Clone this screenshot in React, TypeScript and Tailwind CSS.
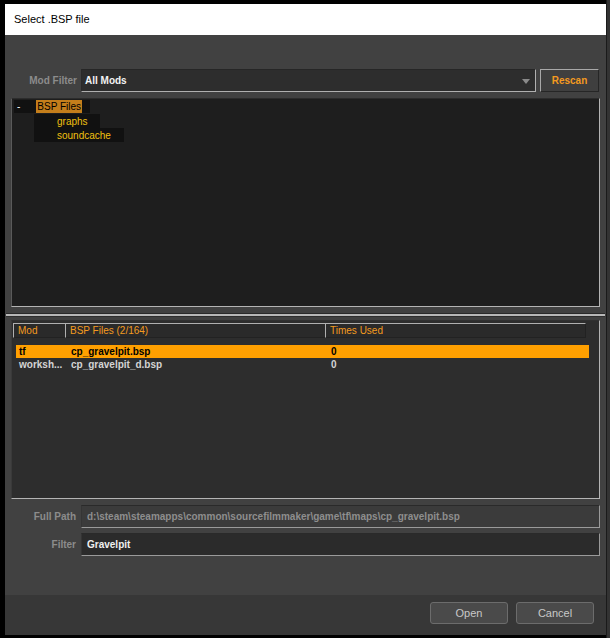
import React from 'react';

const sans = { fontFamily: '"Liberation Sans", Arial, sans-serif' };

type Row = { mod: string; file: string; used: string; selected?: boolean };

const rows: Row[] = [
  { mod: 'tf', file: 'cp_gravelpit.bsp', used: '0', selected: true },
  { mod: 'worksh...', file: 'cp_gravelpit_d.bsp', used: '0' },
];

function Field({ label, value, disabled }: { label: string; value: string; disabled?: boolean }) {
  return (
    <div className="flex h-[23px]">
      <div className="w-[76px] pr-[5px] flex items-center justify-end text-[10px] font-bold text-[#8c8c8c]">
        {label}
      </div>
      <div
        className={`w-[519px] flex items-center pl-[5px] border-t border-l border-t-[#2a2a2a] border-l-[#353535] border-b border-r border-b-[#9a9a9a] border-r-[#9a9a9a] text-[10px] font-bold ${
          disabled ? 'bg-[#3b3b3b] text-[#8e8e8e]' : 'bg-[#2b2b2b] text-[#f0f0f0]'
        }`}
      >
        {value}
      </div>
    </div>
  );
}

export default function App() {
  return (
    <div className="w-[610px] h-[638px] bg-black flex overflow-hidden" style={sans}>
      <div className="w-[5px] shrink-0" />

      <div className="w-[601px] shrink-0 pt-[4px] flex flex-col">
        {/* Title bar */}
        <div className="h-[31px] bg-white flex items-center pl-[9px] text-[11px] text-black">
          Select .BSP file
        </div>

        {/* Body */}
        <div className="h-[560px] bg-[#414141] flex flex-col pt-[34px]">
          {/* Mod filter row */}
          <div className="flex h-[23px]">
            <div className="w-[76px] pr-[4px] flex items-center justify-end text-[10px] font-bold text-[#8c8c8c]">
              Mod Filter
            </div>
            <div className="w-[455px] relative flex items-center pl-[3px] bg-[#2d2d2d] border-t border-l border-t-[#262626] border-l-[#2a2a2a] border-b border-r border-b-[#b0b0b0] border-r-[#b0b0b0] text-[10px] font-bold text-[#f2f2f2]">
              All Mods
              <svg className="absolute right-[5px] top-[9px]" width="8" height="5" viewBox="0 0 8 5">
                <path d="M0 0 H8 L4 5 Z" fill="#8a8a8a" />
              </svg>
            </div>
            <div className="ml-[4px] w-[59px] flex items-center justify-center bg-[#3f3f3f] border-t border-l border-t-[#a8a8a8] border-l-[#a8a8a8] border-b border-r border-b-[#262626] border-r-[#262626] text-[10px] font-bold text-[#f39a1f]">
              Rescan
            </div>
          </div>

          {/* Tree panel */}
          <div className="mt-[6px] ml-[6px] w-[589px] h-[209px] bg-[#1e1e1e] border-t border-l border-t-[#2c2c2c] border-l-[#5a5a5a] border-b border-r border-b-[#b4b4b4] border-r-[#b4b4b4] pt-[1px] text-[10px]">
            <div className="flex h-[14px]">
              <div className="ml-[2px] w-[76px] h-[13px] bg-[#111111] flex items-center">
                <span className="ml-[3px] text-white">-</span>
                <span className="ml-[16px] px-[1px] h-[13px] flex items-center bg-[#c47e1b] text-black">
                  BSP Files
                </span>
              </div>
            </div>
            <div className="flex h-[14px]">
              <div className="ml-[22px] w-[66px] h-[14px] bg-[#111111] flex items-center pl-[23px] text-[#f0c010]">
                graphs
              </div>
            </div>
            <div className="flex h-[14px]">
              <div className="ml-[22px] w-[90px] h-[14px] bg-[#111111] flex items-center pl-[23px] text-[#f0c010]">
                soundcache
              </div>
            </div>
          </div>

          {/* Splitter */}
          <div className="h-[13px] flex flex-col">
            <div className="h-[6px]" />
            <div className="h-[1px] ml-[1px] w-[599px] bg-[#2a2a2a]" />
            <div className="h-[2px] ml-[1px] w-[599px] bg-[#b8b8b8]" />
            <div className="h-[1px] ml-[1px] w-[599px] bg-[#2f2f2f]" />
          </div>

          {/* List panel */}
          <div className="ml-[6px] w-[589px] h-[179px] bg-[#2d2d2d] border-t border-l border-t-[#303030] border-l-[#3a3a3a] border-b border-r border-b-[#b4b4b4] border-r-[#b4b4b4] pt-[2px] pl-[1px]">
            <div className="flex h-[15px] text-[10px] text-[#f39a1f]">
              <div className="w-[52px] pl-[4px] flex items-center bg-[#2a2a2a] border-t border-l border-[#b0b0b0] border-b border-b-[#222222]">
                Mod
              </div>
              <div className="w-[260px] pl-[4px] flex items-center bg-[#2a2a2a] border-t border-l border-[#b0b0b0] border-b border-b-[#222222]">
                BSP Files (2/164)
              </div>
              <div className="w-[261px] pl-[4px] flex items-center bg-[#2a2a2a] border-t border-l border-[#b0b0b0] border-b border-b-[#222222] border-r border-r-[#222222]">
                Times Used
              </div>
            </div>
            <div className="mt-[7px] ml-[3px] w-[573px] flex flex-col">
              {rows.map((r) => (
                <div
                  key={r.file}
                  className={`flex items-center h-[13px] text-[10px] font-bold ${
                    r.selected ? 'bg-[#ffa000] text-black' : 'text-[#d4d4d4]'
                  }`}
                >
                  <span className="w-[55px] pl-[3px]">{r.mod}</span>
                  <span className="w-[260px]">{r.file}</span>
                  <span>{r.used}</span>
                </div>
              ))}
            </div>
          </div>

          {/* Path / filter fields */}
          <div className="mt-[6px] flex flex-col gap-[5px]">
            <Field
              label="Full Path"
              value="d:\steam\steamapps\common\sourcefilmmaker\game\tf\maps\cp_gravelpit.bsp"
              disabled
            />
            <Field label="Filter" value="Gravelpit" />
          </div>
        </div>

        {/* Footer */}
        <div className="h-[40px] bg-[#373737] flex items-start justify-end pt-[7px] pr-[12px] gap-[8px]">
          {['Open', 'Cancel'].map((b) => (
            <div
              key={b}
              className="w-[78px] h-[22px] rounded-[3px] border border-[#6c6c6c] bg-[#4a4a4a] flex items-center justify-center text-[11px] text-[#c8c8c8]"
            >
              {b}
            </div>
          ))}
        </div>
      </div>

      <div className="w-[4px] shrink-0 flex">
        <div className="w-[1px] bg-[#1a1a1a]" />
        <div className="w-[3px] bg-[#333333]" />
      </div>
    </div>
  );
}
